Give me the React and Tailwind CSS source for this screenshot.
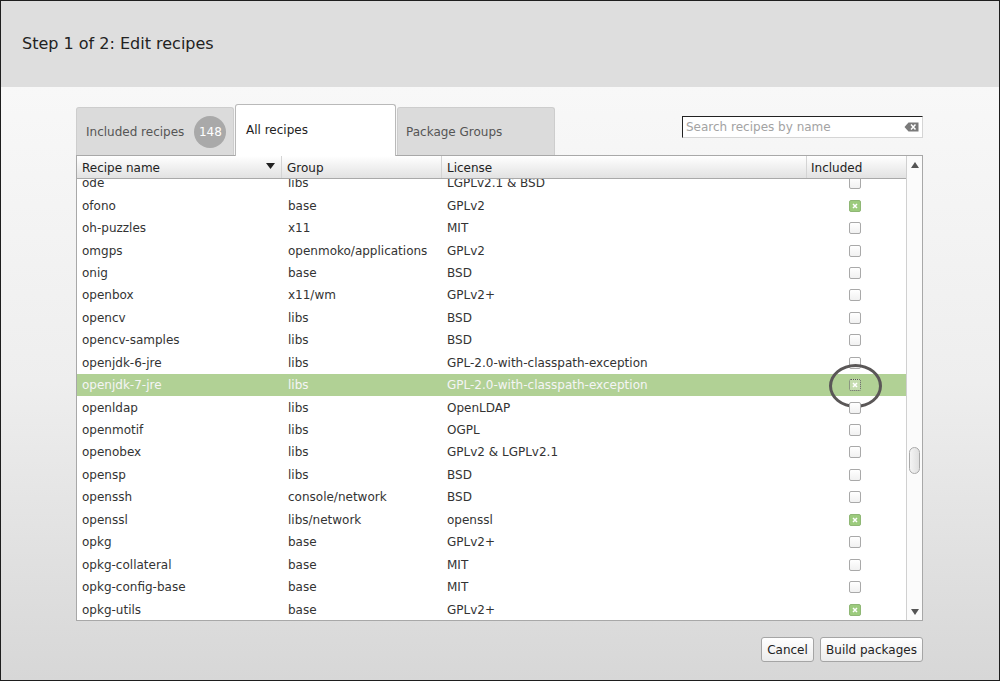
const rows = [
  ["ode", "libs", "LGPLv2.1 & BSD", false],
  ["ofono", "base", "GPLv2", true],
  ["oh-puzzles", "x11", "MIT", false],
  ["omgps", "openmoko/applications", "GPLv2", false],
  ["onig", "base", "BSD", false],
  ["openbox", "x11/wm", "GPLv2+", false],
  ["opencv", "libs", "BSD", false],
  ["opencv-samples", "libs", "BSD", false],
  ["openjdk-6-jre", "libs", "GPL-2.0-with-classpath-exception", false],
  ["openjdk-7-jre", "libs", "GPL-2.0-with-classpath-exception", true, true],
  ["openldap", "libs", "OpenLDAP", false],
  ["openmotif", "libs", "OGPL", false],
  ["openobex", "libs", "GPLv2 & LGPLv2.1", false],
  ["opensp", "libs", "BSD", false],
  ["openssh", "console/network", "BSD", false],
  ["openssl", "libs/network", "openssl", true],
  ["opkg", "base", "GPLv2+", false],
  ["opkg-collateral", "base", "MIT", false],
  ["opkg-config-base", "base", "MIT", false],
  ["opkg-utils", "base", "GPLv2+", true],
];

function Checkbox({ checked, focused }) {
  if (checked) {
    return (
      <div
        className={`w-[12px] h-[12px] rounded-[2px] border flex items-center justify-center ${
          focused ? "border-dotted border-[#555] bg-[#c4dcae]" : "border-[#8fb775] bg-[#9ccb7d]"
        }`}
      >
        <svg width="6" height="6" viewBox="0 0 6 6">
          <path d="M1 1 L5 5 M5 1 L1 5" stroke="#ffffff" strokeWidth="1.5" />
        </svg>
      </div>
    );
  }
  return (
    <div className="w-[12px] h-[12px] rounded-[2px] border border-[#a9a9a9] bg-gradient-to-b from-white to-[#f1f1f1]" />
  );
}

function Row({ name, group, license, included, selected }) {
  return (
    <div
      className={`grid grid-cols-[205px_160px_365px_98px] h-[22.45px] items-center text-[12px] ${
        selected ? "bg-[#b1d195] text-[#f5f5f5]" : "text-[#333]"
      }`}
    >
      <div className="pl-[5px] whitespace-nowrap">{name}</div>
      <div className="pl-[6px] whitespace-nowrap">{group}</div>
      <div className="pl-[5px] whitespace-nowrap">{license}</div>
      <div className="relative flex justify-center pr-[2px]">
        <Checkbox checked={included} focused={selected} />
        {selected && (
          <div className="absolute left-[22px] top-[-15px] w-[53px] h-[44px] rounded-[50%] border-[3px] border-[#5a5757]" />
        )}
      </div>
    </div>
  );
}

export default function App() {
  return (
    <div className="w-[1000px] h-[681px] border border-[#1e1e1e] flex flex-col font-['DejaVu_Sans',sans-serif]">
      {/* header band */}
      <div className="h-[86px] bg-[#dedede] flex items-center pl-[21px] pb-[1px]">
        <h1 className="text-[16px] text-[#222]">Step 1 of 2: Edit recipes</h1>
      </div>

      <div className="flex-1 flex flex-col bg-gradient-to-b from-[#f8f8f8] via-[#eeeeee] to-[#d7d7d7] pl-[75px] pr-[76px]">
        {/* tabs + search */}
        <div className="flex items-end justify-between pt-[16px]">
          <div className="flex items-end gap-[1px]">
            <div className="w-[158px] h-[48px] bg-[#dbdbdb] border border-b-0 border-[#cdcdcd] rounded-t-[3px] flex items-center pl-[9px] text-[12px] text-[#555]">
              <span>Included recipes</span>
              <span className="ml-[10px] w-[32px] h-[32px] rounded-full bg-[#a9a9a9] text-white text-[12px] flex items-center justify-center">
                148
              </span>
            </div>
            <div className="w-[161px] h-[52px] bg-white border border-b-0 border-[#b9b9b9] rounded-t-[3px] flex items-center pl-[10px] pb-[1px] text-[12px] text-[#222] relative top-[1px]">
              All recipes
            </div>
            <div className="w-[158px] h-[48px] bg-[#dbdbdb] border border-b-0 border-[#cdcdcd] rounded-t-[3px] flex items-center pl-[8px] text-[12px] text-[#555]">
              Package Groups
            </div>
          </div>
          <div className="self-start mt-[13px] w-[241px] h-[22px] bg-white border border-[#d5d5d5] border-t-[#222] border-l-[#222] flex items-center justify-between pl-[3px] pr-[3px]">
            <span className="text-[12px] text-[#a3a3a3]">Search recipes by name</span>
            <svg width="15" height="10" viewBox="0 0 15 10">
              <path d="M0.5 5 L4.5 0.5 H14.5 V9.5 H4.5 Z" fill="#7a7a7a" />
              <path d="M7 2.5 L11.5 7.5 M11.5 2.5 L7 7.5" stroke="#ffffff" strokeWidth="1.5" />
            </svg>
          </div>
        </div>

        {/* table */}
        <div className="h-[466px] border border-[#a8a8a8] bg-white flex">
          <div className="flex-1 flex flex-col">
            <div className="h-[23px] grid grid-cols-[205px_160px_365px_98px] bg-gradient-to-b from-white to-[#e2e2e2] border-b border-[#a9a9a9] text-[12px] text-[#222]">
              <div className="flex items-center justify-between pl-[5px] pr-[6px] border-r border-[#d4d4d4] pt-[2px]">
                <span>Recipe name</span>
                <svg width="9" height="6" viewBox="0 0 9 6" className="mb-[4px]">
                  <path d="M0 0 H9 L4.5 6 Z" fill="#222" />
                </svg>
              </div>
              <div className="flex items-center pl-[5px] border-r border-[#d4d4d4] pt-[2px]">Group</div>
              <div className="flex items-center pl-[5px] border-r border-[#d4d4d4] pt-[2px]">License</div>
              <div className="flex items-center pl-[4px] pt-[2px]">Included</div>
            </div>
            <div className="flex-1 overflow-hidden">
              <div className="mt-[-7px]">
                {rows.map(([name, group, license, included, selected]) => (
                  <Row
                    key={name}
                    name={name}
                    group={group}
                    license={license}
                    included={included}
                    selected={selected}
                  />
                ))}
              </div>
            </div>
          </div>
          {/* scrollbar */}
          <div className="w-[16px] border-l border-[#d0d0d0] bg-[#fbfbfb] flex flex-col items-center py-[5px]">
            <svg width="8" height="6" viewBox="0 0 8 6" className="mt-[1px]">
              <path d="M4 0 L8 6 H0 Z" fill="#555" />
            </svg>
            <div className="flex-1 w-full flex flex-col items-center">
              <div className="mt-[279px] w-[11px] h-[27px] rounded-[6px] border border-[#a9a9a9] bg-gradient-to-r from-[#f4f4f4] to-[#e0e0e0]" />
            </div>
            <svg width="8" height="6" viewBox="0 0 8 6">
              <path d="M0 0 H8 L4 6 Z" fill="#555" />
            </svg>
          </div>
        </div>

        {/* buttons */}
        <div className="flex justify-end gap-[6px] mt-[16px]">
          <button className="w-[53px] h-[25px] rounded-[3px] border border-[#a5a5a5] bg-gradient-to-b from-white to-[#ececec] text-[12px] text-[#222]">
            Cancel
          </button>
          <button className="w-[103px] h-[25px] rounded-[3px] border border-[#a5a5a5] bg-gradient-to-b from-white to-[#ececec] text-[12px] text-[#222]">
            Build packages
          </button>
        </div>
      </div>
    </div>
  );
}
